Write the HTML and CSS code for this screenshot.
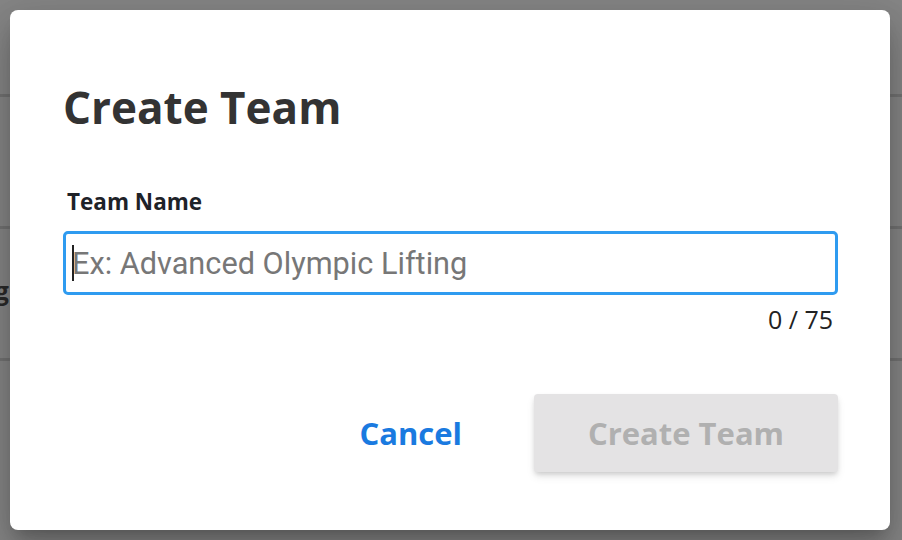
FILE: index.html
```html
<!DOCTYPE html>
<html>
<head>
<meta charset="utf-8">
<link rel="stylesheet" href="styles.css">
</head>
<body>
<div class="page">
  <div class="row row-first"></div>
  <div class="row"></div>
  <div class="row"><div class="bg-name"><span>Olympic Lifting</span></div></div>
  <div class="row row-last"></div>
</div>
<div class="dialog">
  <h1 class="title">Create Team</h1>
  <label class="label" for="team">Team Name</label>
  <div class="input-box">
    <span class="caret"></span>
    <input id="team" class="input" type="text" placeholder="Ex: Advanced Olympic Lifting">
  </div>
  <div class="counter">0 / 75</div>
  <div class="actions">
    <button class="btn-cancel">Cancel</button>
    <button class="btn-create" disabled>Create Team</button>
  </div>
</div>
</body>
</html>
```
FILE: styles.css
```css
html, body {
  margin: 0;
  padding: 0;
  width: 902px;
  height: 540px;
  overflow: hidden;
  background: #868686;
  font-family: "Open Sans", "Noto Sans", sans-serif;
}
.page {
  display: flex;
  flex-direction: column;
}
.row {
  height: 129px;
  border-bottom: 3px solid #737373;
  display: flex;
  align-items: center;
}
.row-first {
  height: 94px;
}
.row-last {
  border-bottom: none;
}
.bg-name {
  width: 9px;
  display: flex;
  justify-content: flex-end;
  white-space: nowrap;
  font-weight: 700;
  font-size: 25px;
  color: #2a2a2a;
  margin-top: -8px;
}
.dialog {
  position: absolute;
  left: 10px;
  top: 10px;
  width: 880px;
  height: 520px;
  box-sizing: border-box;
  background: #fff;
  border-radius: 8px;
  padding: 0 52px 0 53px;
  box-shadow: 0 11px 15px -7px rgba(0,0,0,.2), 0 24px 38px 3px rgba(0,0,0,.14), 0 9px 46px 8px rgba(0,0,0,.12);
  display: flex;
  flex-direction: column;
}
.title {
  margin: 71px 0 0 0;
  font-size: 44px;
  line-height: 52px;
  font-weight: 700;
  color: #333;
}
.label {
  margin-top: 55px;
  margin-left: 4px;
  font-size: 22.5px;
  line-height: 28px;
  font-weight: 700;
  color: #1e2228;
}
.input-box {
  margin-top: 15px;
  height: 64px;
  box-sizing: border-box;
  border: 3px solid #2f9bf0;
  border-radius: 5px;
  display: flex;
  align-items: center;
  position: relative;
}
.caret {
  position: absolute;
  left: 6px;
  top: 11px;
  width: 2px;
  height: 36px;
  background: #222;
}
.input {
  flex: 1;
  border: none;
  outline: none;
  background: transparent;
  font-family: Roboto, sans-serif;
  font-size: 30.7px;
  padding: 0 0 0 6px;
  color: #333;
}
.input::placeholder {
  color: #777;
}
.counter {
  margin-top: 9px;
  text-align: right;
  padding-right: 5px;
  font-size: 25px;
  line-height: 30px;
  color: #222;
}
.actions {
  margin-top: 60px;
  display: flex;
  justify-content: flex-end;
  align-items: center;
  gap: 72px;
}
.btn-cancel {
  border: none;
  background: transparent;
  font-family: "Open Sans", sans-serif;
  font-weight: 700;
  font-size: 31px;
  color: #1a7ae0;
  padding: 0;
}
.btn-create {
  width: 304px;
  height: 78px;
  border: none;
  border-radius: 4px;
  background: #e4e3e4;
  font-family: "Open Sans", sans-serif;
  font-weight: 700;
  font-size: 31px;
  color: #b0b0b0;
  box-shadow: 0 3px 5px -1px rgba(0,0,0,.15), 0 5px 8px 0 rgba(0,0,0,.08);
}
```
